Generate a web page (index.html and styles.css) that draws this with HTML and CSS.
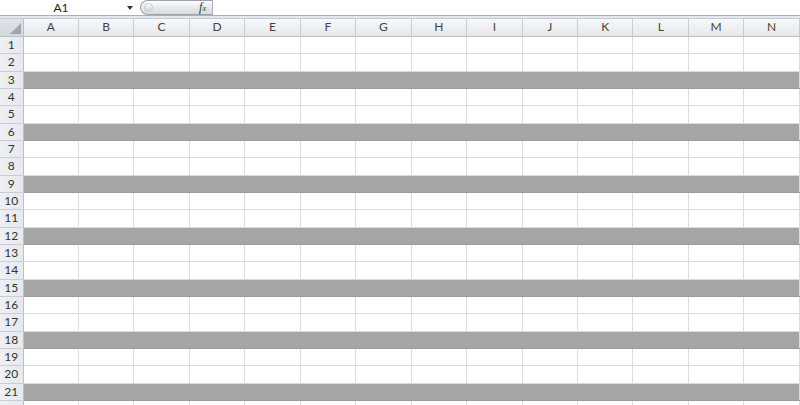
FILE: index.html
```html
<!DOCTYPE html>
<html lang="en">
<head>
    <meta charset="UTF-8">
    <title>Sheet1</title>
    <link rel="stylesheet" href="styles.css">
</head>
<body>
    <div class="formula-bar">
        <div class="name-box">A1</div>
        <div class="name-arrow"></div>
        <div class="fx-box">
            <span class="fx-knob"></span>
            <span class="fx">f<sub>x</sub></span>
        </div>
        <div class="formula-input"></div>
    </div>
    <div class="bar-gap"></div>

    <table class="sheet" id="sheet">
        <thead>
            <tr>
                <th class="corner"><span class="corner-tri"></span></th>
                <th>A</th><th>B</th><th>C</th><th>D</th><th>E</th><th>F</th><th>G</th>
                <th>H</th><th>I</th><th>J</th><th>K</th><th>L</th><th>M</th><th>N</th>
            </tr>
        </thead>
        <tbody id="rows"></tbody>
    </table>

    <script>
        const body = document.getElementById("rows");
        // 21 numbered rows, plus the top edge of the next one
        for (let i = 1; i <= 22; i++) {
            const tr = document.createElement("tr");
            if (i % 3 === 2) tr.className = "tall";
            let html = `<td class="row-head">${i <= 21 ? i : ""}</td>`;
            if (i % 3 === 0) {
                tr.classList.add("band");
                html += `<td colspan="14"></td>`;
            } else {
                for (let c = 0; c < 14; c++) html += "<td></td>";
            }
            tr.innerHTML = html;
            body.appendChild(tr);
        }
    </script>
</body>
</html>
```

FILE: styles.css
```css
* {
    margin: 0;
    padding: 0;
    box-sizing: border-box;
}

body {
    width: 800px;
    height: 405px;
    overflow: hidden;
    background: #fff;
    font-family: Lato, 'Liberation Sans', sans-serif;
    font-size: 12px;
    color: #333;
}

/* formula bar */
.formula-bar {
    display: flex;
    align-items: center;
    height: 16px;
    background: #fff;
    border-bottom: 1px solid #a7b0bb;
}

.name-box {
    width: 122px;
    text-align: center;
    line-height: 15px;
    color: #222;
}

.name-arrow {
    width: 0;
    height: 0;
    margin-left: 5px;
    border-left: 3px solid transparent;
    border-right: 3px solid transparent;
    border-top: 4px solid #333;
}

.fx-box {
    display: flex;
    align-items: center;
    justify-content: flex-end;
    position: relative;
    width: 72px;
    height: 15px;
    margin-left: 7px;
    padding-right: 6px;
    border: 1px solid #9aa3ad;
    border-right: none;
    border-radius: 8px 0 0 8px;
    background: linear-gradient(#fdfdfd, #e3e6ea 60%, #d8dce1);
}

.fx-knob {
    position: absolute;
    left: 3px;
    top: 2px;
    width: 9px;
    height: 9px;
    border-radius: 50%;
    background: linear-gradient(#fff, #cdd2d8);
    border: 1px solid #c3c9d0;
}

.fx {
    font-family: 'Liberation Serif', serif;
    font-style: italic;
    font-size: 12px;
    color: #333;
    line-height: 12px;
}

.fx sub {
    font-size: 8px;
    vertical-align: baseline;
}

.formula-input {
    flex: 1;
    height: 16px;
    border-left: 1px solid #a7b0bb;
}

.bar-gap {
    height: 3px;
    background: #e4e8ee;
    border-bottom: 1px solid #c3cad3;
}

/* grid */
.sheet {
    width: 800px;
    border-collapse: collapse;
    table-layout: fixed;
}

.sheet th {
    height: 17px;
    font-weight: normal;
    color: #444;
    background: linear-gradient(#f7f8fa, #e5e8ec);
    border-right: 1px solid #c9ced6;
    border-bottom: 1px solid #b9c0ca;
    line-height: 16px;
}

.sheet th.corner {
    width: 23px;
    position: relative;
    background: linear-gradient(#dfe3e8, #d3d8de);
    border-right: 1px solid #b9c0ca;
}

.corner-tri {
    position: absolute;
    right: 2px;
    bottom: 2px;
    width: 0;
    height: 0;
    border-left: 11px solid transparent;
    border-bottom: 11px solid #9ea6b0;
}

.sheet td {
    height: 17px;
    border-right: 1px solid #dadcdf;
    border-bottom: 1px solid #dadcdf;
}

.sheet tr.tall td {
    height: 18px;
}

.sheet td.row-head {
    text-align: center;
    color: #333;
    background: linear-gradient(90deg, #eef0f3, #e6e9ed);
    border-right: 1px solid #b9c0ca;
    border-bottom: 1px solid #c9ced6;
    line-height: 16px;
}

.sheet tr.band td {
    background: #a5a5a5;
    border-bottom: 1px solid #9c9c9c;
}

.sheet tr.band td.row-head {
    background: linear-gradient(90deg, #eef0f3, #e6e9ed);
    border-bottom: 1px solid #c9ced6;
}
```
